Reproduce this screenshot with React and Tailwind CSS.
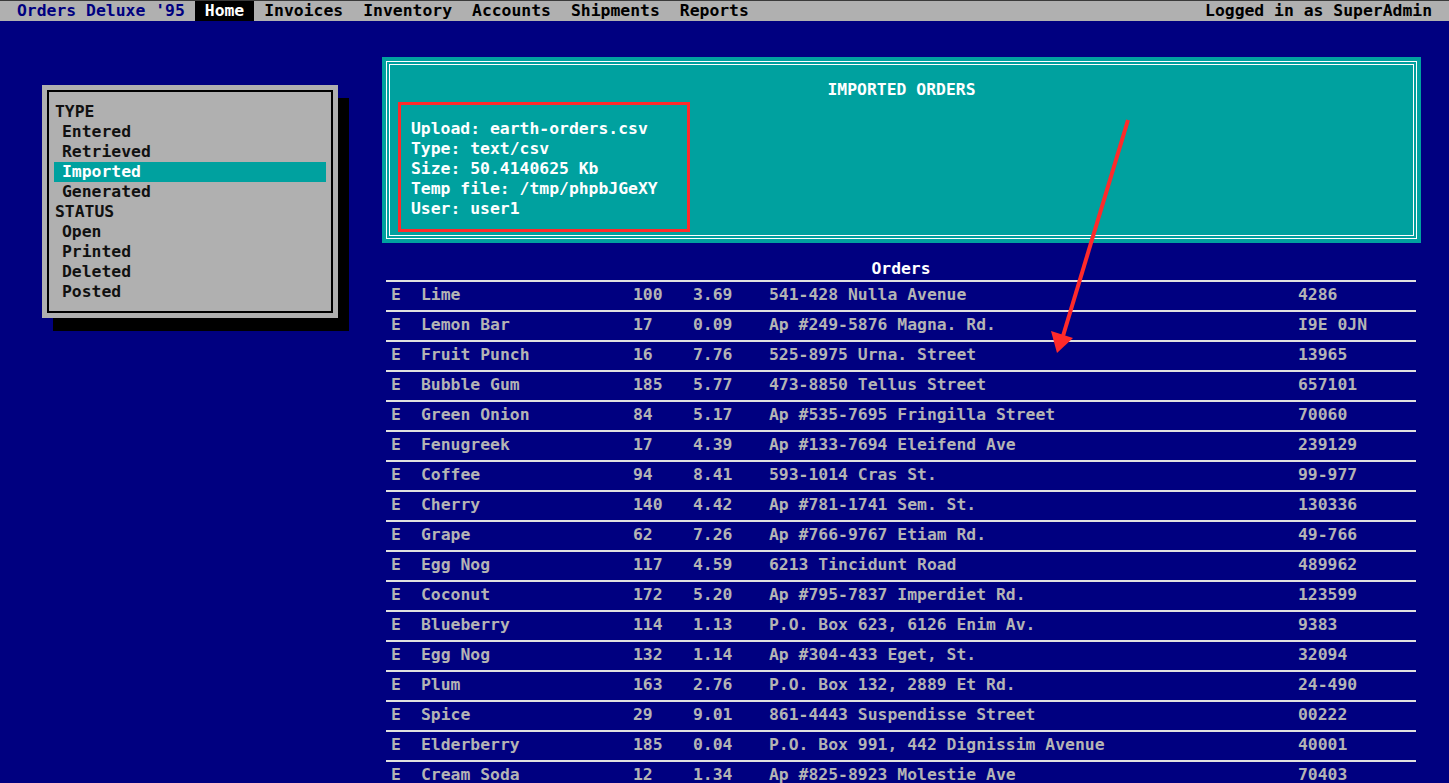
import React from 'react';

const rows = [
  ['E', 'Lime', '100', '3.69', '541-428 Nulla Avenue', '4286'],
  ['E', 'Lemon Bar', '17', '0.09', 'Ap #249-5876 Magna. Rd.', 'I9E 0JN'],
  ['E', 'Fruit Punch', '16', '7.76', '525-8975 Urna. Street', '13965'],
  ['E', 'Bubble Gum', '185', '5.77', '473-8850 Tellus Street', '657101'],
  ['E', 'Green Onion', '84', '5.17', 'Ap #535-7695 Fringilla Street', '70060'],
  ['E', 'Fenugreek', '17', '4.39', 'Ap #133-7694 Eleifend Ave', '239129'],
  ['E', 'Coffee', '94', '8.41', '593-1014 Cras St.', '99-977'],
  ['E', 'Cherry', '140', '4.42', 'Ap #781-1741 Sem. St.', '130336'],
  ['E', 'Grape', '62', '7.26', 'Ap #766-9767 Etiam Rd.', '49-766'],
  ['E', 'Egg Nog', '117', '4.59', '6213 Tincidunt Road', '489962'],
  ['E', 'Coconut', '172', '5.20', 'Ap #795-7837 Imperdiet Rd.', '123599'],
  ['E', 'Blueberry', '114', '1.13', 'P.O. Box 623, 6126 Enim Av.', '9383'],
  ['E', 'Egg Nog', '132', '1.14', 'Ap #304-433 Eget, St.', '32094'],
  ['E', 'Plum', '163', '2.76', 'P.O. Box 132, 2889 Et Rd.', '24-490'],
  ['E', 'Spice', '29', '9.01', '861-4443 Suspendisse Street', '00222'],
  ['E', 'Elderberry', '185', '0.04', 'P.O. Box 991, 442 Dignissim Avenue', '40001'],
  ['E', 'Cream Soda', '12', '1.34', 'Ap #825-8923 Molestie Ave', '70403'],
];

const menu = ['Invoices', 'Inventory', 'Accounts', 'Shipments', 'Reports'];

const filters = [
  { label: 'TYPE', head: true },
  { label: 'Entered' },
  { label: 'Retrieved' },
  { label: 'Imported', active: true },
  { label: 'Generated' },
  { label: 'STATUS', head: true },
  { label: 'Open' },
  { label: 'Printed' },
  { label: 'Deleted' },
  { label: 'Posted' },
];

export default function App() {
  return (
    <div className="relative h-[783px] overflow-hidden bg-[#000080] font-['DejaVu_Sans_Mono',monospace] text-[16.4px] font-bold leading-5">
      {/* Top bar */}
      <div className="flex h-[21px] items-center border-t border-[#3a3a3a] bg-[#b0b0b0] text-black">
        <span className="pl-[17px] pr-[10px] text-[#000080]">Orders Deluxe '95</span>
        <span className="bg-black px-[10px] text-white">Home</span>
        {menu.map((m) => (
          <span key={m} className="px-[10px]">{m}</span>
        ))}
        <span className="ml-auto pr-[17px]">Logged in as SuperAdmin</span>
      </div>

      <div className="flex pl-[42px]">
        {/* Filter menu */}
        <div className="mt-[64px] w-[296px] shrink-0 self-start">
          <div className="bg-[#b0b0b0] p-[5px] shadow-[11px_13px_0_0_#000]">
            <div className="border-2 border-black px-[5px] pt-[10px] pb-[9px] text-[#111]">
              {filters.map((f) => (
                <div
                  key={f.label}
                  className={`h-5 ${f.head ? 'pl-px' : 'pl-2'} ${f.active ? 'bg-[#00a19f] text-white' : ''}`}
                >
                  {f.label}
                </div>
              ))}
            </div>
          </div>
        </div>

        {/* Right side */}
        <div className="ml-[44px] w-[1039px] shrink-0">
          <div className="relative mt-[36px] bg-[#00a19f] p-[4px] text-white">
            <div className="h-[178px] border-4 border-double border-white pt-[15px] pl-[21px]">
              <div className="pr-[21px] text-center">IMPORTED ORDERS</div>
              <div className="mt-[19px]">
                <div>Upload: earth-orders.csv</div>
                <div>Type: text/csv</div>
                <div>Size: 50.4140625 Kb</div>
                <div>Temp file: /tmp/phpbJGeXY</div>
                <div>User: user1</div>
              </div>
            </div>
            {/* annotation box */}
            <div className="absolute left-[16px] top-[45px] h-[130px] w-[292px] border-[3px] border-[#ff2a2a]" />
          </div>

          {/* Orders table */}
          <div className="ml-[4px] mt-[15px] w-[1030px]">
            <div className="h-[22px] pt-px text-center text-white">Orders</div>
            {rows.map((r, i) => (
              <div
                key={i}
                className="grid h-[30px] grid-cols-[30px_212px_60px_76px_529px_1fr] items-center border-t-2 border-[#e0e0e0] pl-[5px] pb-[2px] text-[#b4b4b4]"
              >
                {r.map((c, j) => (
                  <span key={j} className="whitespace-pre">{c}</span>
                ))}
              </div>
            ))}
          </div>
        </div>
      </div>

      {/* Red arrow annotation */}
      <svg className="pointer-events-none absolute left-0 top-0" width="1449" height="783">
        <line x1="1128" y1="120" x2="1063" y2="336" stroke="#ff2a2a" strokeWidth="4" />
        <polygon points="1057,353 1051,331 1073,338" fill="#ff2a2a" />
      </svg>
    </div>
  );
}
